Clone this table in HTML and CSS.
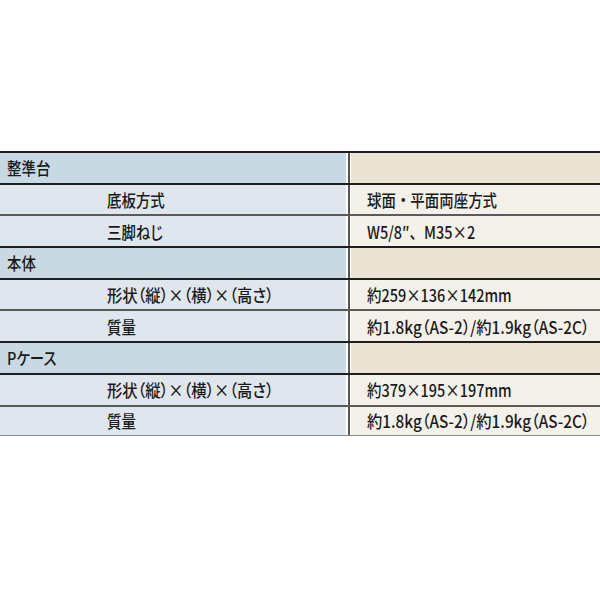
FILE: index.html
```html
<!DOCTYPE html>
<html lang="ja">
<head>
<meta charset="utf-8">
<link rel="stylesheet" href="styles.css">
</head>
<body>
<div class="page">
  <div class="spec">
    <div class="row head"><div class="l"><span class="t">整準台</span></div><div class="r"></div></div>
    <div class="row sub"><div class="l"><span class="t">底板方式</span></div><div class="r"><span class="t np">球面・平面両座方式</span></div></div>
    <div class="row sub"><div class="l"><span class="t">三脚ねじ</span></div><div class="r"><span class="t np">W5/8″、M35×2</span></div></div>
    <div class="row head"><div class="l"><span class="t">本体</span></div><div class="r"></div></div>
    <div class="row sub"><div class="l"><span class="t wide">形状（縦）×（横）×（高さ）</span></div><div class="r"><span class="t">約259×136×142mm</span></div></div>
    <div class="row sub"><div class="l"><span class="t">質量</span></div><div class="r"><span class="t wide">約1.8kg（AS-2）/約1.9kg（AS-2C）</span></div></div>
    <div class="row head"><div class="l"><span class="t">Pケース</span></div><div class="r"></div></div>
    <div class="row sub"><div class="l"><span class="t wide">形状（縦）×（横）×（高さ）</span></div><div class="r"><span class="t">約379×195×197mm</span></div></div>
    <div class="row sub last"><div class="l"><span class="t">質量</span></div><div class="r"><span class="t wide">約1.8kg（AS-2）/約1.9kg（AS-2C）</span></div></div>
  </div>
</div>
</body>
</html>
```

FILE: styles.css
```css
html, body {
  margin: 0;
  padding: 0;
  background: #ffffff;
}
.page {
  width: 600px;
  height: 600px;
  padding-top: 151px;
  box-sizing: border-box;
  font-family: "Noto Sans CJK JP", "Noto Sans", sans-serif;
  font-size: 17px;
  font-weight: 500;
  color: #1a1a1a;
  overflow: hidden;
}
.spec {
  display: flex;
  flex-direction: column;
}
.row {
  display: grid;
  grid-template-columns: 347px 253px;
  height: 31.7px;
  box-sizing: border-box;
  border-top: 2px solid #5a5a5a;
}
.row.head {
  border-top: 2px solid #1e1e1e;
}
.row.head + .row {
  border-top: 2px solid #1e1e1e;
}
.row.last {
  border-bottom: 1px solid #8a8a8a;
}
.l, .r {
  display: flex;
  align-items: center;
  line-height: 1;
  white-space: nowrap;
  overflow: hidden;
}
.t {
  display: inline-block;
  transform: scaleX(0.85);
  transform-origin: left center;
  font-feature-settings: "palt";
}
.t.np {
  font-feature-settings: normal;
}
.t.wide {
  transform: scaleX(0.9);
}
.r {
  border-left: 2px solid #555;
  padding-left: 17px;
  margin-left: 1px;
  box-shadow: inset 1px 0 0 #fff;
}
.l {
  margin-right: 1px;
}
.head .l {
  background: #c9d9e3;
  padding-left: 7px;
}
.head .r {
  background: #ebe3d3;
}
.sub .l {
  background: #dfe6ee;
  padding-left: 107px;
}
.sub .r {
  background: #f4f1eb;
}
```
